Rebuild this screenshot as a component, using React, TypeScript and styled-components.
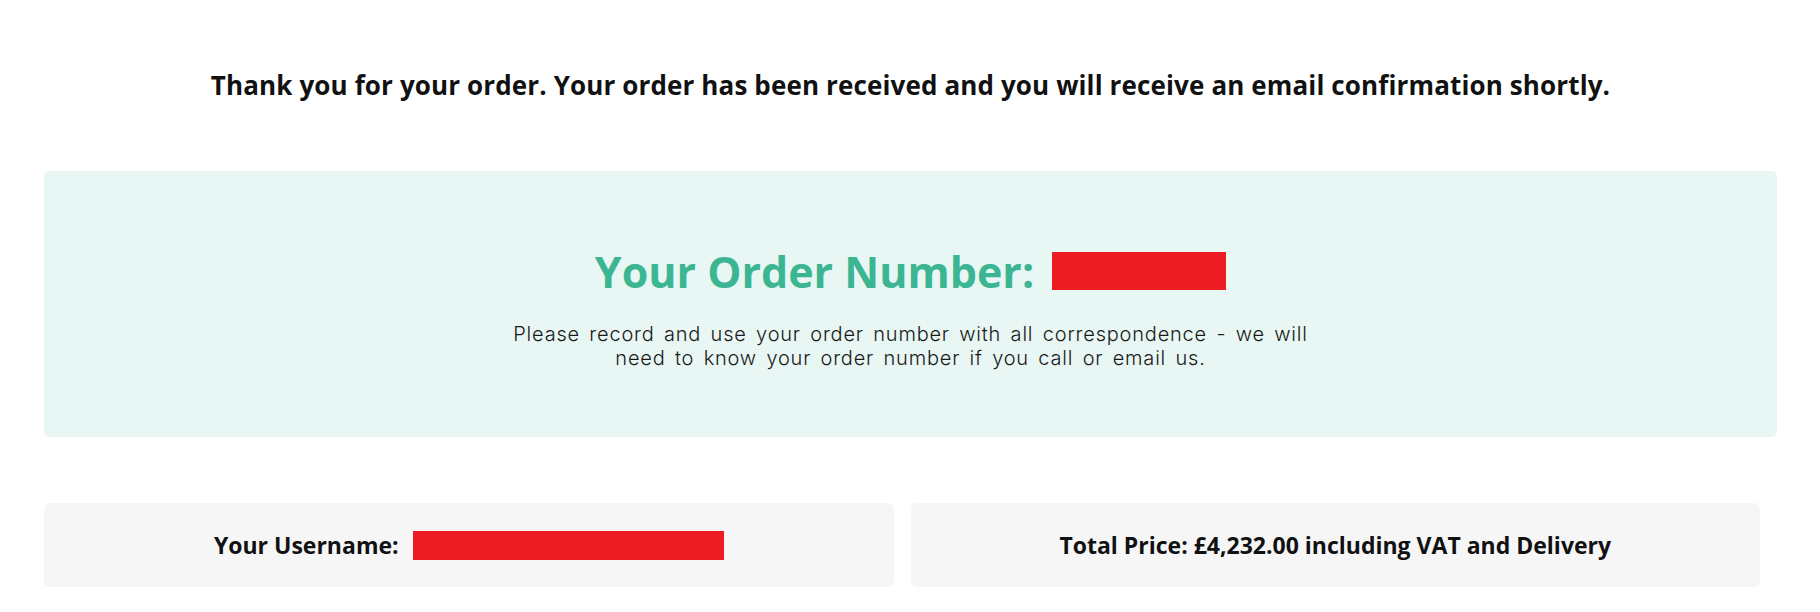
import React from "react";
import styled, { createGlobalStyle } from "styled-components";

const GlobalStyle = createGlobalStyle`
  html, body { margin: 0; padding: 0; background: #ffffff; }
  body { font-family: "Open Sans", "Liberation Sans", sans-serif; color: #111111; }
`;

const Page = styled.main`
  padding: 68px 43px 0 44px;
  box-sizing: border-box;
  width: 1820px;
`;

const Thanks = styled.h1`
  margin: 0 0 69px;
  font-family: "Open Sans", sans-serif;
  font-weight: 700;
  font-size: 26px;
  letter-spacing: 0.13px;
  line-height: 34px;
  text-align: center;
  color: #111111;
`;

const OrderPanel = styled.section`
  background: #e8f7f3;
  border-radius: 5px;
  height: 266px;
  box-sizing: border-box;
  padding-top: 71px;
  display: flex;
  flex-direction: column;
  align-items: center;
`;

const OrderTitle = styled.h2`
  margin: 0;
  display: flex;
  align-items: center;
  gap: 18px;
  font-family: "Open Sans", sans-serif;
  font-weight: 700;
  font-size: 43px;
  line-height: 60px;
  color: #3bb592;
`;

const Redacted = styled.span<{ $w: number; $h: number }>`
  display: inline-block;
  width: ${(p) => p.$w}px;
  height: ${(p) => p.$h}px;
  background: #ed1c24;
`;

const OrderNumberBox = styled(Redacted)`
  position: relative;
  top: -1px;
`;

const Note = styled.p`
  margin: 20px 0 0;
  max-width: 810px;
  font-family: "Inter", "Noto Sans", sans-serif;
  font-weight: 300;
  font-size: 20px;
  letter-spacing: 0.8px;
  word-spacing: 3px;
  line-height: 24px;
  text-align: center;
  color: #1a1a1a;
`;

const InfoRow = styled.div`
  margin: 66px 17px 0 0;
  display: grid;
  grid-template-columns: 1fr 1fr;
  gap: 17px;
`;

const InfoCard = styled.div`
  background: #f6f6f6;
  border-radius: 6px;
  height: 84px;
  display: flex;
  align-items: center;
  justify-content: center;
  gap: 14px;
  font-family: "Open Sans", sans-serif;
  font-weight: 700;
  font-size: 23px;
  color: #111111;
`;

export default function App() {
  return (
    <>
      <GlobalStyle />
      <Page>
        <Thanks>
          Thank you for your order. Your order has been received and you will receive an email confirmation shortly.
        </Thanks>
        <OrderPanel>
          <OrderTitle>
            Your Order Number:
            <OrderNumberBox $w={174} $h={38} />
          </OrderTitle>
          <Note>
            Please record and use your order number with all correspondence - we will need to know your order number if you call or email us.
          </Note>
        </OrderPanel>
        <InfoRow>
          <InfoCard>
            <span>Your Username:</span>
            <Redacted $w={311} $h={29} />
          </InfoCard>
          <InfoCard>
            <span>Total Price: £4,232.00 including VAT and Delivery</span>
          </InfoCard>
        </InfoRow>
      </Page>
    </>
  );
}
